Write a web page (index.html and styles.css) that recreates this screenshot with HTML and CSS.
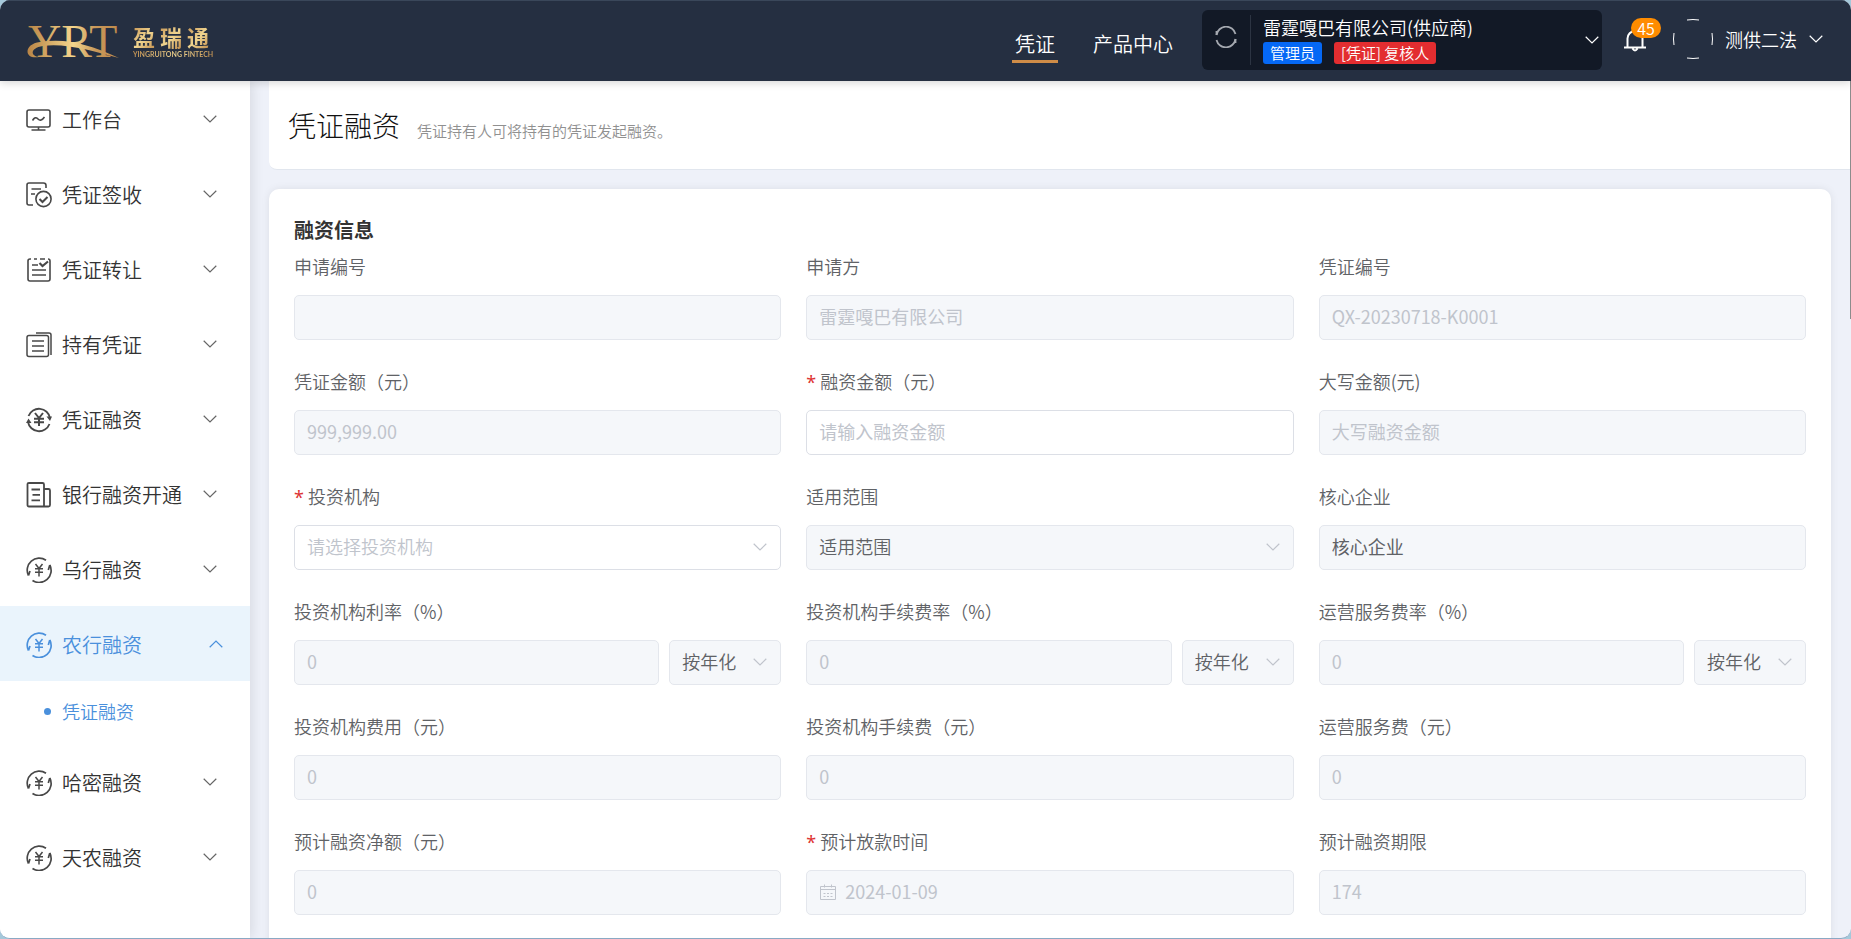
FILE: index.html
```html
<!DOCTYPE html>
<html lang="zh-CN">
<head>
<meta charset="utf-8">
<title>凭证融资</title>
<link rel="stylesheet" href="styles.css">
</head>
<body>
<svg class="sprite" aria-hidden="true">
  <defs>
    <linearGradient id="gold" x1="0" y1="0" x2="1" y2="0">
      <stop offset="0" stop-color="#b98546"/><stop offset=".5" stop-color="#f3d58c"/><stop offset=".75" stop-color="#c9985a"/><stop offset="1" stop-color="#c08c4c"/>
    </linearGradient>
    <symbol id="chev" viewBox="0 0 14 8"><path d="M.7.8 7 7 13.300.8" fill="none" stroke="currentColor" stroke-width="1.200"/></symbol>
    <symbol id="i-desk" viewBox="0 0 26 26"><g fill="none" stroke="currentColor" stroke-width="1.6"><rect x="1" y="3" width="23" height="17" rx="2"/><path d="M6.500 13.500Q9 9 12 12T18.500 10M12.500 20v3M5.500 23h14"/></g></symbol>
    <symbol id="i-sign" viewBox="0 0 26 26"><g fill="none" stroke="currentColor" stroke-width="1.600"><path d="M20 6V3.500Q20 1 17.500 1H3Q1 1 1 3v18q0 2 2 2h4M5.500 7h9.500M5 12h4"/><circle cx="17.500" cy="17" r="7.600"/><path d="m13.500 17 3 3 5-5" stroke-width="2"/></g></symbol>
    <symbol id="i-move" viewBox="0 0 26 26"><g fill="none" stroke="currentColor" stroke-width="1.600"><path d="M5 2H4Q2 2 2 4v18q0 2 2 2h18q2 0 2-2V4q0-2-2-2M8 2h3M14 2h5M6 8h6M6 13h14M6 18h14"/><path d="m13.500 6 3 3 5.500-4.500" stroke-width="2.200"/></g></symbol>
    <symbol id="i-hold" viewBox="0 0 26 26"><g fill="none" stroke="currentColor" stroke-width="1.500"><rect x="1" y="3.500" width="21.500" height="21" rx="2"/><path d="M10 1h13q2 0 2 2v20M6 9h12M6 14h12M6 19h12"/></g></symbol>
    <symbol id="i-fin" viewBox="0 0 26 26"><g fill="none" stroke="currentColor" stroke-width="1.800"><path d="M2.500 9A11.200 11.200 0 0 1 24 11M23.500 17A11.200 11.200 0 0 1 2 15"/><path d="m9 6 4 5 4-5M8 11.800h10M8 15.300h10M13 11v8" stroke-width="2"/></g><path d="M20.500 9.500H26L24 14zM0 16h5.500L2.500 11.500z" fill="currentColor"/></symbol>
    <symbol id="i-bank" viewBox="0 0 26 26"><g fill="none" stroke="currentColor" stroke-width="1.800"><path d="M18 24.500H3q-1.500 0-1.500-1.500V2Q1.500 1 3 1h13.500Q18 1 18 2.500zM18 7h4.500Q24 7 24 8.500V23q0 1.500-1.500 1.500H18"/><path d="M5.500 7.500h8.500M6.500 12.800h7.500M5.500 18.300h8.500"/></g></symbol>
    <symbol id="i-loop" viewBox="0 0 26 26"><g fill="none" stroke="currentColor" stroke-width="1.700"><path d="M20 3.200A12 12 0 0 0 2.500 18.500M2.500 18.500 4 14M6.500 23.500A12 12 0 0 0 23.800 8M23.800 8 22.300 13"/><path d="m9.500 7 3.500 4.500L16.500 7M9 11.800h8M9 15.300h8M13 11v8.500" stroke-width="1.500"/></g></symbol>
  </defs>
</svg>

<header class="topbar">
  <a class="brand" href="#" aria-label="盈瑞通">
    <svg class="mark" viewBox="0 0 94 60" aria-hidden="true">
      <text x="2" y="46" fill="url(#gold)" font-family="Liberation Serif, serif" font-size="46">YRT</text>
      <path d="M13 46C-2 49-3 33 14 31 40 27 62 33 93 47 66 40 40 32 17 35 4 37 4 45 13 46z" fill="url(#gold)"/>
    </svg>
    <span class="brand-text">
      <span class="brand-cn"><span>盈</span><span>瑞</span><span>通</span></span>
      <span class="brand-en">YINGRUITONG FINTECH</span>
    </span>
  </a>
  <nav class="topnav">
    <a class="on" href="#">凭证</a>
    <a href="#">产品中心</a>
  </nav>
  <div class="account">
    <button class="refresh" type="button" aria-label="刷新">
      <svg viewBox="0 0 22 22"><g fill="none" stroke="currentColor" stroke-width="1.800"><path d="M1.500 9A9.700 9.700 0 0 1 20.500 8M20.500 13A9.700 9.700 0 0 1 1.500 14"/><path d="M1.500 5v4M20.500 17v-4"/></g></svg>
    </button>
    <div class="company">
      <span class="company-name">雷霆嘎巴有限公司(供应商)</span>
      <span class="tags"><span class="tag">管理员</span><span class="tag red">[凭证] 复核人</span></span>
    </div>
    <svg class="chev"><use href="#chev"/></svg>
  </div>
  <button class="bell" type="button" aria-label="消息">
    <svg viewBox="0 0 22 24"><g fill="none" stroke="currentColor" stroke-width="2"><path d="M3.500 19V10.500a7.500 7.500 0 0 1 15 0V19M0 19.500h22M8.500 20.500q2.500 4 5 0"/></g></svg>
    <span class="badge">45</span>
  </button>
  <button class="user" type="button">
    <svg class="avatar" viewBox="0 0 40 40"><path d="M14 1q6-1 12 0M14 39q6 1 12 0M1 14q-1 6 0 12M39 14q1 6 0 12" fill="none" stroke="currentColor"/></svg>
    <span>测供二法</span>
    <svg class="chev"><use href="#chev"/></svg>
  </button>
</header>

<div class="body">
  <nav class="side">
    <a class="item" href="#"><svg class="ico"><use href="#i-desk"/></svg><span>工作台</span><svg class="chev"><use href="#chev"/></svg></a>
    <a class="item" href="#"><svg class="ico"><use href="#i-sign"/></svg><span>凭证签收</span><svg class="chev"><use href="#chev"/></svg></a>
    <a class="item" href="#"><svg class="ico"><use href="#i-move"/></svg><span>凭证转让</span><svg class="chev"><use href="#chev"/></svg></a>
    <a class="item" href="#"><svg class="ico"><use href="#i-hold"/></svg><span>持有凭证</span><svg class="chev"><use href="#chev"/></svg></a>
    <a class="item" href="#"><svg class="ico"><use href="#i-fin"/></svg><span>凭证融资</span><svg class="chev"><use href="#chev"/></svg></a>
    <a class="item" href="#"><svg class="ico"><use href="#i-bank"/></svg><span>银行融资开通</span><svg class="chev"><use href="#chev"/></svg></a>
    <a class="item" href="#"><svg class="ico"><use href="#i-loop"/></svg><span>乌行融资</span><svg class="chev"><use href="#chev"/></svg></a>
    <a class="item open" href="#"><svg class="ico"><use href="#i-loop"/></svg><span>农行融资</span><svg class="chev"><use href="#chev"/></svg></a>
    <a class="sub" href="#">凭证融资</a>
    <a class="item" href="#"><svg class="ico"><use href="#i-loop"/></svg><span>哈密融资</span><svg class="chev"><use href="#chev"/></svg></a>
    <a class="item" href="#"><svg class="ico"><use href="#i-loop"/></svg><span>天农融资</span><svg class="chev"><use href="#chev"/></svg></a>
  </nav>

  <main class="main">
    <div class="heading"><h1>凭证融资</h1><p>凭证持有人可将持有的凭证发起融资。</p></div>
    <section class="card">
      <h2>融资信息</h2>
      <form class="grid">
        <div class="field"><label for="f1">申请编号</label><input id="f1" disabled></div>
        <div class="field"><label for="f2">申请方</label><input id="f2" value="雷霆嘎巴有限公司" disabled></div>
        <div class="field"><label for="f3">凭证编号</label><input id="f3" value="QX-20230718-K0001" disabled></div>

        <div class="field"><label for="f4">凭证金额（元）</label><input id="f4" value="999,999.00" disabled></div>
        <div class="field"><label class="req" for="f5">融资金额（元）</label><input id="f5" placeholder="请输入融资金额"></div>
        <div class="field"><label for="f6">大写金额(元)</label><input id="f6" placeholder="大写融资金额" disabled></div>

        <div class="field"><label class="req" for="f7">投资机构</label><div class="pick"><select id="f7" class="empty"><option>请选择投资机构</option></select><svg class="chev"><use href="#chev"/></svg></div></div>
        <div class="field"><label for="f8">适用范围</label><div class="pick"><select id="f8" disabled><option>适用范围</option></select><svg class="chev"><use href="#chev"/></svg></div></div>
        <div class="field"><label for="f9">核心企业</label><input id="f9" class="dark" value="核心企业" disabled></div>

        <div class="field"><label for="f10">投资机构利率（%）</label><div class="pair"><input id="f10" value="0" disabled><div class="pick"><select aria-label="投资机构利率方式" disabled><option>按年化</option></select><svg class="chev"><use href="#chev"/></svg></div></div></div>
        <div class="field"><label for="f11">投资机构手续费率（%）</label><div class="pair"><input id="f11" value="0" disabled><div class="pick"><select aria-label="投资机构手续费率方式" disabled><option>按年化</option></select><svg class="chev"><use href="#chev"/></svg></div></div></div>
        <div class="field"><label for="f12">运营服务费率（%）</label><div class="pair"><input id="f12" value="0" disabled><div class="pick"><select aria-label="运营服务费率方式" disabled><option>按年化</option></select><svg class="chev"><use href="#chev"/></svg></div></div></div>

        <div class="field"><label for="f13">投资机构费用（元）</label><input id="f13" value="0" disabled></div>
        <div class="field"><label for="f14">投资机构手续费（元）</label><input id="f14" value="0" disabled></div>
        <div class="field"><label for="f15">运营服务费（元）</label><input id="f15" value="0" disabled></div>

        <div class="field"><label for="f16">预计融资净额（元）</label><input id="f16" value="0" disabled></div>
        <div class="field"><label class="req" for="f17">预计放款时间</label><div class="date"><input id="f17" value="2024-01-09" disabled><svg viewBox="0 0 16 16"><g fill="none" stroke="currentColor"><path d="M.5 2.500h15v13H.5zM.5 5.500h15M4.500.5v3M11.500.5v3"/><path d="M3.500 9.500h2M7 9.500h2M10.500 9.500h2M3.500 12.500h2M7 12.500h2M10.500 12.500h2"/></g></svg></div></div>
        <div class="field"><label for="f18">预计融资期限</label><input id="f18" value="174" disabled></div>
      </form>
    </section>
  </main>
</div>
</body>
</html>
```

FILE: styles.css
```css
* { box-sizing: border-box; }
html { height: 100%; background: #a5c8da; }
body {
  height: 100%; margin: 0; overflow: hidden;
  display: flex; flex-direction: column;
  border-radius: 10px;
  border-bottom: 1px solid #8aa9c4;
  background: #eef1f9;
  font-family: "Noto Sans CJK SC", "Noto Sans", sans-serif;
  font-weight: 350; font-size: 18px; color: #333;
}
a { color: inherit; text-decoration: none; }
button { padding: 0; border: 0; background: none; color: inherit; font: inherit; }
h1, h2, p { margin: 0; }
.sprite { position: absolute; width: 0; height: 0; }
.chev { width: 14px; height: 8px; flex: none; }

.topbar {
  position: relative; z-index: 2; flex: none;
  display: flex; align-items: center; height: 81px;
  padding: 0 28px 2px 26px;
  background: #252f41; color: #fff;
  border-top: 1px solid #3a475a;
  box-shadow: 0 2px 8px rgba(0, 0, 0, .16);
}
.brand { display: flex; align-items: center; gap: 13px; margin-right: auto; padding-top: 2px; }
.mark { width: 94px; height: 60px; }
.brand-text { display: flex; flex-direction: column; }
.brand-cn { display: flex; gap: 5px; font-size: 22px; line-height: 26px; font-weight: 700; }
.brand-cn span, .brand-en { background: linear-gradient(135deg, #c08c4c, #f0d590 55%, #c08c4c); background-clip: text; color: transparent; }
.brand-en { font: 700 7px/10px Lato, sans-serif; }
.topnav { display: flex; gap: 32px; margin-right: 26px; padding-top: 6px; font-size: 20px; }
.topnav a { padding: 4px 3px 0; line-height: 32px; border-bottom: 3px solid transparent; }
.topnav .on { border-color: #cf8c47; }
.account {
  display: flex; align-items: center; width: 400px; height: 60px;
  padding-right: 3px; border-radius: 6px; background: #121926;
}
.refresh { width: 49px; height: 50px; padding-bottom: 12px; border-right: 1px solid #2c3442; color: #a5a9b0; }
.refresh svg { width: 22px; height: 22px; vertical-align: middle; }
.company { flex: 1; padding: 0 0 3px 12px; }
.company-name { display: block; line-height: 28px; padding-bottom: 1px; }
.tags { display: flex; gap: 12px; font-size: 15px; line-height: 22px; }
.tag { padding: 0 7px; border-radius: 3px; background: #0568f5; }
.tag.red { background: #e32d30; }
.bell { position: relative; width: 22px; height: 24px; margin-left: 22px; }
.bell svg { width: 22px; height: 24px; display: block; }
.badge {
  position: absolute; left: 7px; top: -10px; width: 30px; height: 20px;
  border-radius: 10px; background: #ff8c00; font-size: 16px; line-height: 20px;
}
.user { display: flex; align-items: center; gap: 12px; margin-left: 27px; padding-bottom: 2px; }
.avatar { width: 40px; height: 40px; }

.body { flex: 1; display: flex; min-height: 0; }
.side { width: 250px; flex: none; background: #fff; box-shadow: 2px 0 12px rgba(0, 0, 0, .1); font-size: 20px; }
.item { display: flex; align-items: center; height: 75px; padding: 0 33px 0 26px; }
.item span { flex: 1; padding: 2px 0 0 10px; }
.ico { width: 26px; height: 26px; margin-top: 2px; color: #484848; }
.item .chev { color: #666; }
.open { padding-right: 27px; background: #eaf4fc; color: #4a90dc; }
.open .ico, .open .chev { color: inherit; }
.open .chev { transform: rotate(180deg); }
.sub { display: flex; align-items: center; gap: 11px; height: 63px; padding: 0 0 3px 44px; font-size: 18px; color: #4a90dc; }
.sub::before { content: ""; width: 7px; height: 7px; border-radius: 50%; background: currentColor; }

.main { position: relative; flex: 1; min-width: 0; padding: 0 1px 0 19px; }
/* thin scroll thumb on the window edge */
.main::after { content: ""; position: absolute; top: 0; right: 0; width: 1px; height: 238px; background: #8c8c8c; }
.heading {
  display: flex; align-items: baseline; gap: 17px; height: 89px; padding: 23px 19px 0;
  background: #fff; border-bottom: 1px solid #e1e6ee; border-radius: 0 0 0 8px;
}
h1 { font-size: 28px; line-height: 42px; font-weight: 300; color: #111; }
.heading p { font-size: 15px; color: #909090; }
.card { margin: 19px 19px 0 0; padding: 27px 25px 40px; background: #fff; border-radius: 10px; box-shadow: 0 0 8px rgba(0, 0, 0, .08); }
h2 { font-size: 20px; line-height: 28px; margin-bottom: 5px; font-weight: 700; }
.grid { display: grid; grid-template-columns: repeat(3, minmax(0, 1fr)); gap: 24px 25px; }
.field { display: flex; flex-direction: column; gap: 12px; color: #606266; }
label { line-height: 34px; }
.req::before { content: "*"; margin-right: 4px; color: #d33; font-family: "Noto Sans", sans-serif; font-weight: 400; line-height: 1; }
input, select {
  width: 100%; height: 45px; padding: 0 12px 3px;
  border: 1px solid #dcdfe6; border-radius: 5px; background: #fff;
  font: inherit; color: #606266; appearance: none; opacity: 1;
}
input { font-weight: 400; }
input:disabled, select:disabled { background: #f5f7fa; border-color: #e4e7ed; }
input:disabled, input::placeholder, .empty { color: #c0c4cc; }
input.dark, select:disabled { color: #606266; }
.pick, .date { position: relative; }
.pick .chev { position: absolute; right: 14px; top: 18px; color: #c0c4cc; }
.pair { display: grid; grid-template-columns: 1fr 112px; gap: 10px; }
.date input { padding-left: 38px; }
.date svg { position: absolute; left: 14px; top: 14px; width: 16px; height: 16px; color: #c0c4cc; }
```
